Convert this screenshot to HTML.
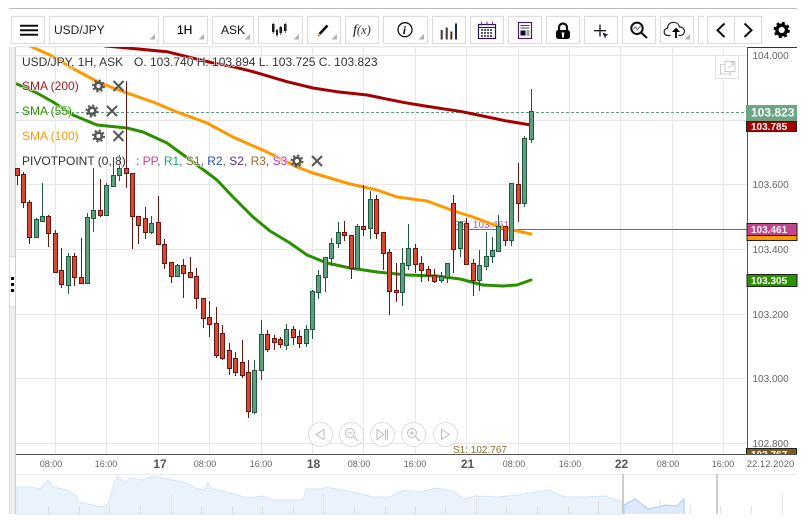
<!DOCTYPE html>
<html><head><meta charset="utf-8"><title>USD/JPY</title>
<style>
html,body{margin:0;padding:0;background:#fff;width:810px;height:520px;overflow:hidden}
svg{display:block;font-family:"Liberation Sans",sans-serif}
.lg text{paint-order:stroke;stroke:#fff;stroke-opacity:.75;stroke-width:1.6px}
</style></head><body>
<svg width="810" height="520" viewBox="0 0 810 520" xmlns="http://www.w3.org/2000/svg">
<defs>
<g id="gear"><circle r="3.4" fill="none" stroke="#555" stroke-width="2.6"/><circle r="5.6" fill="none" stroke="#555" stroke-width="1.8" stroke-dasharray="2.2 2.2"/></g>
<path id="xx" d="M-5-5L5 5M5-5L-5 5" stroke="#555" stroke-width="2" fill="none"/>
</defs>

<!-- top rule -->
<rect x="9" y="8" width="788" height="1" fill="#bdbdbd"/>

<!-- toolbar buttons -->
<g fill="#fff" stroke="#ddd" stroke-width="1.2">
<rect x="11.5" y="16.5" width="33" height="27"/>
<rect x="49.5" y="16.5" width="109" height="27"/>
<rect x="163.5" y="16.5" width="44" height="27"/>
<rect x="212.5" y="16.5" width="41" height="27"/>
<rect x="258.5" y="16.5" width="44" height="27"/>
<rect x="307.5" y="16.5" width="33" height="27"/>
<rect x="345.5" y="16.5" width="33" height="27"/>
<rect x="383.5" y="16.5" width="44" height="27"/>
<rect x="432.5" y="16.5" width="33" height="27"/>
<rect x="470.5" y="16.5" width="33" height="27"/>
<rect x="508.5" y="16.5" width="33" height="27"/>
<rect x="546.5" y="16.5" width="33" height="27"/>
<rect x="584.5" y="16.5" width="33" height="27"/>
<rect x="622.5" y="16.5" width="33" height="27"/>
<rect x="660.5" y="16.5" width="33" height="27"/>
<path d="M704 16.5H698.5V43.5H704" fill="none"/>
<rect x="707.5" y="16.5" width="54" height="27"/>
<path d="M734.5 16.5V43.5"/>
</g>
<!-- dropdown corners -->
<g fill="#b0b0b0">
<path d="M155 39.5V34L149.5 39.5Z"/>
<path d="M204 39.5V34L198.5 39.5Z"/>
<path d="M250 39.5V34L244.5 39.5Z"/>
<path d="M299 39.5V34L293.5 39.5Z"/>
<path d="M337 39.5V34L331.5 39.5Z"/>
<path d="M424 39.5V34L418.5 39.5Z"/>
<path d="M690 39.5V34L684.5 39.5Z"/>
</g>
<!-- hamburger -->
<path d="M20 25.7H38M20 30.2H38M20 34.7H38" stroke="#111" stroke-width="2"/>
<text x="54" y="34" font-size="12" fill="#1a1a2a">USD/JPY</text>
<text x="177" y="34" font-size="12" fill="#000" stroke="#000" stroke-width=".2">1H</text>
<text x="221" y="34" font-size="12" fill="#111">ASK</text>
<!-- candles icon -->
<path d="M272 24h2.500v8H272zM279.500 27H282v6h-2.500zM284 24h2.500v7H284zM276 30h2v5h-2z" fill="#111"/>
<path d="M273.200 23v11M277 29v8M280.700 26v9M285.200 23v10" stroke="#333" stroke-width=".8"/>
<!-- pencil -->
<path d="M319.500 34L327.500 25.500" stroke="#111" stroke-width="2.600"/><path d="M317.500 36.500l2.600-1-1.600-1.600z" fill="#b86a10"/>
<!-- f(x) -->
<text x="353" y="34" font-size="14" font-family="'Liberation Serif',serif" font-style="italic" fill="#111">f<tspan font-size="12.500" fill="#333">(x)</tspan></text>
<!-- info -->
<circle cx="405" cy="29.700" r="7" fill="none" stroke="#111" stroke-width="1.300"/>
<text x="402.800" y="34" font-size="12" font-family="'Liberation Serif',serif" font-style="italic" font-weight="bold" fill="#111">i</text>
<!-- bars -->
<path d="M441.700 30V39.500M446.700 27.500V39.500M451.300 31.500V39.500M456 23.500V39.500" stroke="#1a2a50" stroke-width="2"/>
<path d="M441 30V39.500M446 27.500V39.500M450.600 31.500V39.500" stroke="#b5650f" stroke-width=".7"/>
<!-- calendar -->
<rect x="478.500" y="24.500" width="17" height="14" fill="#fff" stroke="#2a0e62" stroke-width="1.200"/>
<path d="M478.500 27.500H495.500" stroke="#2a0e62" stroke-width="1"/>
<path d="M481.500 21.500V25.500M487 21.500V25.500M492.500 21.500V25.500" stroke="#8a2a8a" stroke-width="1"/>
<path d="M481 30h12M481 33h12M481 36h12" stroke="#223" stroke-width="1.500" stroke-dasharray="2 1"/>
<!-- news -->
<rect x="518.500" y="22.500" width="13" height="16" fill="#fff" stroke="#4a2060" stroke-width="1.200"/>
<rect x="520.500" y="30.500" width="5" height="5" fill="#0a0a30"/>
<path d="M520.500 25.500h9M520.500 28h9M526.500 31h3M526.500 33h3M526.500 35h3" stroke="#444" stroke-width="1"/>
<!-- lock -->
<path d="M559 31v-3.500a4 4 0 0 1 8 0V31" fill="none" stroke="#111" stroke-width="2.200"/>
<rect x="556" y="30" width="14" height="9" rx="2.500" fill="#080808"/>
<path d="M561.500 32.500h3l-.6 2.500v2.500h-1.800V35z" fill="#fff"/>
<!-- cross -->
<path d="M600 24.500v12M594 30.700h12" stroke="#222" stroke-width="1.400"/>
<path d="M602.500 32.500l6 2.300-2.400 1-1 2.700z" fill="#123"/>
<!-- zoom -->
<circle cx="637" cy="28.300" r="5.700" fill="none" stroke="#111" stroke-width="2"/>
<path d="M641 32.500L647 38" stroke="#111" stroke-width="2.200"/>
<path d="M633.500 29l2-2 2 2.500 3-3.500" fill="none" stroke="#446" stroke-width=".8"/>
<!-- cloud -->
<path d="M670.500 35.500h-2.500a3.600 3.600 0 0 1-.5-7.200c.3-4.200 3-6 6-6 3 0 5.300 1.800 6 4.700 3.200-.2 5 2 5 4.300 0 2.300-1.800 4.200-4 4.200h-2" fill="none" stroke="#222" stroke-width="1.200"/>
<path d="M676 38V30.500" stroke="#000" stroke-width="1.800"/><path d="M672 32l4-4.500 4 4.500z" fill="#000"/>
<!-- chevrons -->
<path d="M724.500 23.500L717.500 30.200L724.500 37" fill="none" stroke="#111" stroke-width="2"/>
<path d="M744.500 23.500L751.500 30.200L744.500 37" fill="none" stroke="#111" stroke-width="2"/>
<!-- settings gear -->
<circle cx="781.700" cy="30" r="4.800" fill="none" stroke="#000" stroke-width="3.400"/>
<circle cx="781.700" cy="30" r="7.100" fill="none" stroke="#000" stroke-width="2.200" stroke-dasharray="2.900 2.680"/>

<!-- left strip -->
<rect x="9" y="47" width="6" height="467" fill="#eee"/>
<rect x="9" y="47" width="1" height="467" fill="#ddd"/>
<rect x="15" y="47" width="1" height="467" fill="#ccc"/>
<rect x="10" y="256.500" width="5" height="50" fill="#fff"/>
<path d="M10 256.500H15M10 306.500H15" stroke="#ddd"/>
<path d="M11 277h3v3h-3zM11 283h3v3h-3zM11 289h3v3h-3z" fill="#000"/>

<!-- top separator -->
<rect x="16" y="46" width="731" height="1.500" fill="#e8e8e8"/>

<!-- grid -->
<g stroke="#e6e6e6" stroke-width="1">
<path d="M16 55.500H747M16 120.500H747M16 184.500H747M16 249.500H747M16 314.500H747M16 378.500H747M16 443.500H747"/>
<path d="M55.500 47V454M106.500 47V454M158.500 47V454M209.500 47V454M261.500 47V454M312.500 47V454M363.500 47V454M415.500 47V454M466.500 47V454M518.500 47V454M569.500 47V454M620.500 47V454M672.500 47V454M723.500 47V454"/>
</g>

<!-- close price dashed -->
<path d="M16 112.500H747" stroke="#5f9f7e" stroke-width="1" stroke-dasharray="3 2"/>
<!-- pivot line -->
<path d="M456 229.500H747" stroke="#b8468c" stroke-width="1"/>
<text x="454" y="228" font-size="10" fill="#c94f9c">PP: 103.461</text>
<text x="453" y="453" font-size="10" fill="#8a6a2f">S1: 102.767</text>

<!-- SMA lines -->
<svg x="16" y="47" width="731" height="407" viewBox="16 47 731 407">
<g fill="none" stroke-width="3" stroke-linejoin="round" stroke-linecap="round">
<path stroke="#a50000" d="M105 46L117 47L167 51.700L187 56.700L213 63L233 66.700L253 71.700L287 81.700L313 88L337 91.700L367 95L383 98.300L405 102.700L425 106L462 111.700L478 115L505 120.700L529 124.700"/>
<path stroke="#ff9800" d="M30 46L50 55L72 68L100 83L127 93L153 102L177 112L207 123L233 137L267 152L297 167L313 173L350 184L377 190L397 197L427 201L457 212L473 217L497 226L513 230L531 234"/>
<path stroke="#2a9000" d="M17 84L37 93L53 102L73 115L97 125L127 128L143 132L167 143L193 162L217 180L233 197L253 217L270 231L290 243L307 255L327 263L350 268L377 272L407 275L437 276L460 279L483 285L503 286L517 285L531 280"/>
</g>
</svg>

<!-- red candles wicks -->
<path fill="none" stroke="#6b1410" stroke-width="1" d="M17.500 168V185M23.500 172V208M29.500 200V244M48.500 215V247M55.500 230V273M61.500 248V288M74.500 253V286M81.500 238V284M100.500 179V217M126.500 81V188M132.500 173V249M138.500 216V244M145.500 207V239M158.500 196V245M164.500 239V269M171.500 262V283M183.500 259V298M190.500 257V278M196.500 268V309M203.500 298V328M209.500 301V337M216.500 307V358M222.500 325V360M229.500 343V375M235.500 352V376M242.500 340V378M248.500 360V418M267.500 330V352M274.500 335V350M280.500 337V348M293.500 326V345M299.500 330V348M344.500 221V241M351.500 235V279M363.500 185V236M376.500 195V239M383.500 232V270M389.500 249V315M396.500 263V302M415.500 244V273M421.500 256V282M428.500 266V281M434.500 269V283M453.500 195V273M466.500 218V265M473.500 259V296M505.500 226V246M518.500 163V222"/>
<!-- green candles wicks -->
<path fill="none" stroke="#1f5a3f" stroke-width="1" d="M36.500 218V238M42.500 183V222M68.500 253V294M87.500 213V283M93.500 168V232M106.500 183V215M113.500 157V186M119.500 155V181M151.500 216V234M177.500 264V277M254.500 360V414M261.500 320V380M286.500 324V350M306.500 325V347M312.500 290V339M318.500 270V299M325.500 257V292M331.500 238V266M338.500 222V248M357.500 224V269M370.500 191V239M402.500 248V306M408.500 224V270M441.500 272V283M447.500 263V283M460.500 221V257M479.500 250V291M486.500 232V270M492.500 237V263M498.500 215V252M511.500 183V246M524.500 136V207M531.500 89V143"/>
<!-- red bodies -->
<path fill="#d44a35" stroke="#6b1410" stroke-width="1" d="M15.500 168.500h4v7h-4zM21.500 174.500h4v28h-4zM27.500 202.500h4v35h-4zM46.500 216.500h4v17h-4zM53.500 233.500h4v39h-4zM59.500 270.500h4v14h-4zM72.500 256.500h4v21h-4zM79.500 277.500h4v6h-4zM98.500 210.500h4v5h-4zM124.500 168.500h4v5h-4zM130.500 173.500h4v43h-4zM136.500 216.500h4v9h-4zM143.500 218.500h4v14h-4zM156.500 222.500h4v22h-4zM162.500 244.500h4v19h-4zM169.500 262.500h4v14h-4zM181.500 265.500h4v8h-4zM188.500 272.500h4v5h-4zM194.500 276.500h4v22h-4zM201.500 298.500h4v20h-4zM207.500 317.500h4v7h-4zM214.500 323.500h4v32h-4zM220.500 333.500h4v25h-4zM227.500 350.500h4v18h-4zM233.500 358.500h4v14h-4zM240.500 362.500h4v13h-4zM246.500 372.500h4v39h-4zM265.500 334.500h4v15h-4zM272.500 338.500h4v4h-4zM278.500 339.500h4v5h-4zM291.500 329.500h4v8h-4zM297.500 336.500h4v7h-4zM342.500 232.500h4v3h-4zM349.500 235.500h4v33h-4zM361.500 226.500h4v3h-4zM374.500 199.500h4v34h-4zM381.500 232.500h4v21h-4zM387.500 252.500h4v39h-4zM394.500 290.500h4v2h-4zM413.500 248.500h4v16h-4zM419.500 263.500h4v7h-4zM426.500 269.500h4v6h-4zM432.500 275.500h4v6h-4zM451.500 203.500h4v46h-4zM464.500 223.500h4v41h-4zM471.500 263.500h4v17h-4zM503.500 226.500h4v14h-4zM516.500 184.500h4v19h-4z"/>
<!-- green bodies -->
<path fill="#5f9f7e" stroke="#1f5a3f" stroke-width="1" d="M34.500 219.500h4v18h-4zM40.500 216.500h4v5h-4zM66.500 256.500h4v29h-4zM85.500 217.500h4v66h-4zM91.500 210.500h4v8h-4zM104.500 185.500h4v30h-4zM111.500 175.500h4v11h-4zM117.500 168.500h4v7h-4zM149.500 223.500h4v9h-4zM175.500 265.500h4v11h-4zM252.500 370.500h4v42h-4zM259.500 334.500h4v36h-4zM284.500 329.500h4v16h-4zM304.500 329.500h4v14h-4zM310.500 291.500h4v38h-4zM316.500 275.500h4v17h-4zM323.500 257.500h4v20h-4zM329.500 243.500h4v15h-4zM336.500 232.500h4v11h-4zM355.500 226.500h4v42h-4zM368.500 199.500h4v29h-4zM400.500 263.500h4v29h-4zM406.500 248.500h4v17h-4zM439.500 276.500h4v4h-4zM445.500 263.500h4v14h-4zM458.500 222.500h4v26h-4zM477.500 265.500h4v15h-4zM484.500 256.500h4v10h-4zM490.500 250.500h4v6h-4zM496.500 226.500h4v25h-4zM509.500 183.500h4v57h-4zM522.500 138.500h4v65h-4zM529.500 111.500h4v28h-4z"/>

<!-- legend -->
<g class="lg" font-size="12">
<text x="22" y="66" fill="#333">USD/JPY, 1H, ASK</text>
<text x="134" y="66" fill="#333">O. 103.740 H. 103.894 L. 103.725 C. 103.823</text>
<text x="22" y="90" fill="#a51c1c">SMA (200)</text>
<text x="22" y="115" fill="#2a9000">SMA (55)</text>
<text x="22" y="140" fill="#ff9800">SMA (100)</text>
<text x="22" y="165" fill="#333">PIVOTPOINT (0, 8)</text>
<text x="136" y="165" fill="#555"> : <tspan fill="#c8418f">PP</tspan>, <tspan fill="#1aa372">R1</tspan>, <tspan fill="#8a6a2f">S1</tspan>, <tspan fill="#2b4fae">R2</tspan>, <tspan fill="#5b2d7b">S2</tspan>, <tspan fill="#996a2a">R3</tspan>, <tspan fill="#d42bd0">S3</tspan></text>
</g>
<use href="#gear" x="98.500" y="86"/><use href="#xx" x="118.500" y="86"/>
<use href="#gear" x="92" y="111"/><use href="#xx" x="112" y="111"/>
<use href="#gear" x="98.500" y="136"/><use href="#xx" x="118.500" y="136"/>
<use href="#gear" x="297" y="161"/><use href="#xx" x="317" y="161"/>

<!-- expand icon -->
<rect x="715.500" y="55.500" width="23" height="23" fill="#fff" stroke="#e2e2e2"/>
<path d="M725 61.500h10v10h-10zM725 64.500h-4.500v9.500h10v-2.500M728 68.500l5.500-5.500M730 62.500h3.500v3.500" fill="none" stroke="#ccc" stroke-width="1"/>

<!-- nav buttons -->
<g fill="#fff" fill-opacity=".7" stroke="#ddd" stroke-width="1">
<circle cx="320.500" cy="434.500" r="12"/><circle cx="351.500" cy="434.500" r="12"/><circle cx="382.500" cy="434.500" r="12"/><circle cx="413.500" cy="434.500" r="12"/><circle cx="445.500" cy="434.500" r="12"/>
</g>
<g fill="none" stroke="#bbb" stroke-width="1">
<path d="M324 429.500v10l-8-5z"/>
<circle cx="350" cy="433" r="4.500"/><path d="M353.500 436.500l4.500 4.500M347.500 433h5"/>
<path d="M377 429.500v10l7-5zM385.500 429.500v10M387.500 429.500v10"/>
<circle cx="412" cy="433" r="4.500"/><path d="M415.500 436.500l4.500 4.500M409.500 433h5M412 430.500v5"/>
<path d="M441.500 429.500v10l8-5z"/>
</g>

<!-- axis -->
<rect x="747" y="47" width="50" height="1" fill="#333"/>
<rect x="747" y="47" width="1" height="407" fill="#555"/>
<rect x="16" y="454" width="781" height="1" fill="#555"/>
<g font-size="10" fill="#666">
<text x="752.500" y="59">104.000</text>
<text x="752.500" y="188">103.600</text>
<text x="752.500" y="253">103.400</text>
<text x="752.500" y="318">103.200</text>
<text x="752.500" y="382">103.000</text>
<text x="752.500" y="447">102.800</text>
</g>

<!-- price tags -->
<rect x="746" y="105" width="51" height="16" fill="#6aa584"/>
<text x="751" y="116.500" font-size="12" font-weight="bold" fill="#fff">103.823</text>
<rect x="746.500" y="121.500" width="50" height="10" fill="#a00000" stroke="#222" stroke-width="1"/>
<text x="751" y="130" font-size="10" font-weight="bold" fill="#fff">103.785</text>
<rect x="747" y="233" width="50" height="7.500" fill="#ff9800" stroke="#222" stroke-width="1"/>
<rect x="747" y="223.500" width="50" height="12" fill="#c2448d" stroke="#222" stroke-width="1"/>
<text x="751" y="233" font-size="10" font-weight="bold" fill="#fff">103.461</text>
<rect x="747" y="274.500" width="50" height="12" fill="#2a9000" stroke="#222" stroke-width="1"/>
<text x="751" y="284" font-size="10" font-weight="bold" fill="#fff">103.305</text>
<svg x="746" y="448" width="51" height="6" viewBox="746 448 51 6">
<rect x="746.500" y="448.500" width="50" height="12" fill="#7d5c1e" stroke="#222" stroke-width="1"/>
<text x="751" y="458" font-size="10" font-weight="bold" fill="#fff">102.767</text>
</svg>

<!-- time labels -->
<g font-size="9" fill="#666" text-anchor="middle">
<text x="51" y="467">08:00</text><text x="106" y="467">16:00</text>
<text x="205" y="467">08:00</text><text x="261" y="467">16:00</text>
<text x="359" y="467">08:00</text><text x="415" y="467">16:00</text>
<text x="514" y="467">08:00</text><text x="570" y="467">16:00</text>
<text x="668" y="467">08:00</text><text x="723" y="467">16:00</text>
<text x="770.500" y="467" font-size="9.500">22.12.2020</text>
</g>
<g font-size="12" font-weight="bold" fill="#555" text-anchor="middle">
<text x="160" y="468">17</text><text x="313.500" y="468">18</text><text x="467.500" y="468">21</text><text x="621.500" y="468">22</text>
</g>

<!-- navigator -->
<rect x="16" y="474" width="781" height="1" fill="#eaeaea"/>
<path fill="#eaf3fc" stroke="#d3e4fa" stroke-width="1" d="M17 514V487L30 487L40 489L48 480L53 487L67 490L75 495L78 502L93 505L100 507L108 505L113 487L117 476L125 483L130 478L143 480L153 476L173 480L187 483L195 488L205 490L208 483L212 489L227 492L247 498L263 496L272 500L303 500L306 489L322 489L325 487L353 492L373 497L390 497L397 493L405 490L418 492L437 488L455 492L463 499L475 496L498 497L518 495L548 490L565 497L585 497L605 496L622 502V514Z"/>
<path fill="#dceafb" stroke="#a9c9f5" stroke-width="1" d="M624 514V505L635 499L648 509L658 507L665 505L677 506L684 499V514"/>
<path stroke="#e2e2e2" stroke-width="1" d="M48.500 506V514M79.500 506V514M109.500 506V514M140.500 506V514M171.500 494V514M201.500 506V514M232.500 506V514M262.500 506V514M293.500 506V514M323.500 494V514M354.500 506V514M385.500 506V514M415.500 506V514M445.500 506V514M476.500 494V514M506.500 506V514M537.500 506V514M568.500 506V514M598.500 500V514M629.500 506V514M659.500 500V514M690.500 506V514M720.500 506V514M751.500 506V514M782.500 494V514"/>
<rect x="622" y="474" width="2" height="40" fill="#ccc"/>
<rect x="716" y="474" width="2" height="40" fill="#ccc"/>
</svg>
</body></html>
